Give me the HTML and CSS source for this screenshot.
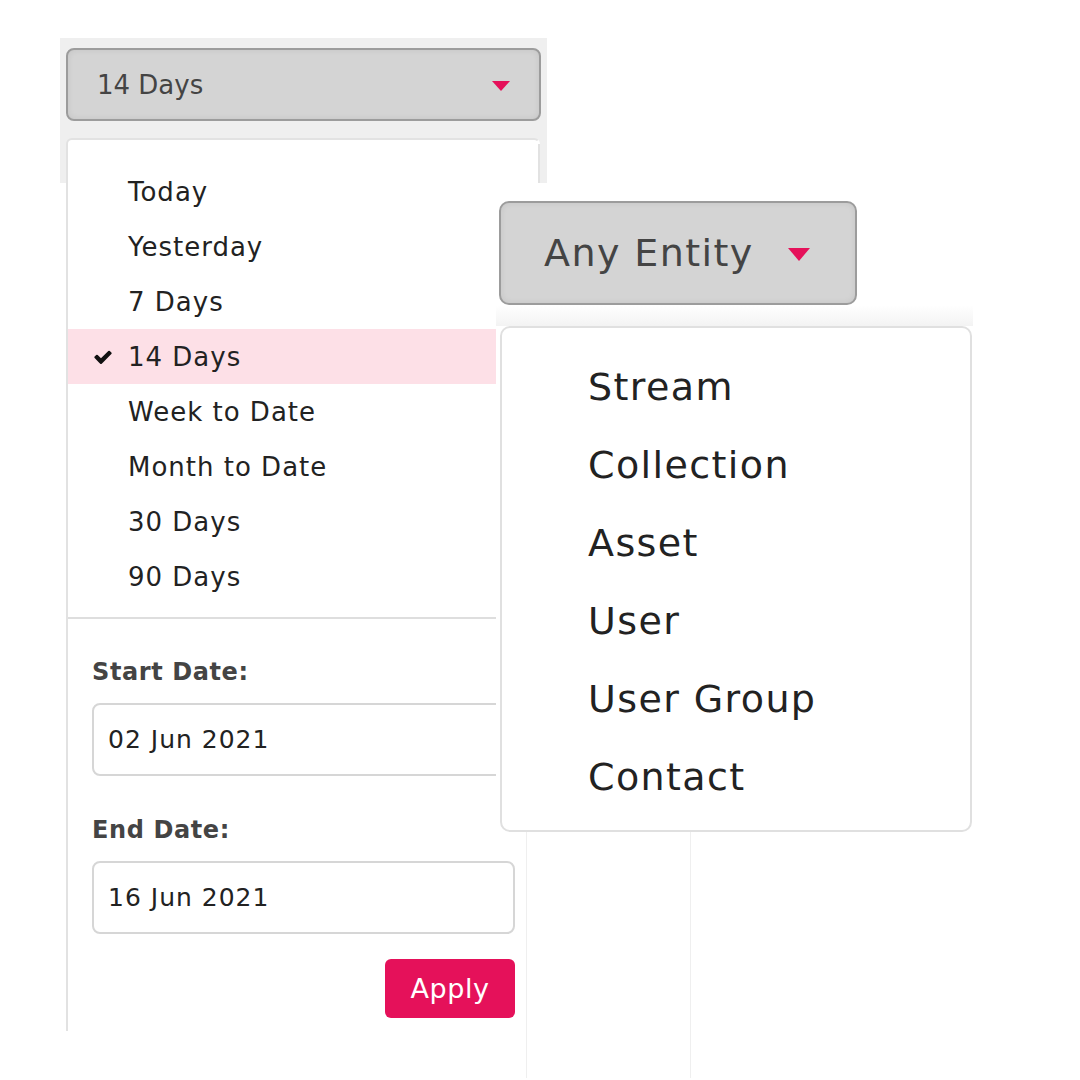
FILE: index.html
```html
<!DOCTYPE html>
<html>
<head>
<meta charset="utf-8">
<link rel="stylesheet" href="styles.css">
</head>
<body>
<div class="stage">
  <div class="date-filter">
    <div class="filter-top">
      <div class="select-btn small">
        <span>14 Days</span>
        <span class="caret caret-sm"></span>
      </div>
    </div>
    <div class="panel">
      <ul class="range-list">
        <li class="range">Today</li>
        <li class="range">Yesterday</li>
        <li class="range">7 Days</li>
        <li class="range active">
          <svg class="check" viewBox="0 0 1792 1792"><path d="M1671 566q0 40-28 68l-724 724-136 136q-28 28-68 28t-68-28l-136-136-362-362q-28-28-28-68t28-68l136-136q28-28 68-28t68 28l294 295 656-657q28-28 68-28t68 28l136 136q28 28 28 68z"/></svg>
          14 Days
        </li>
        <li class="range">Week to Date</li>
        <li class="range">Month to Date</li>
        <li class="range">30 Days</li>
        <li class="range">90 Days</li>
      </ul>
      <div class="custom">
        <label class="field-label">Start Date:</label>
        <div class="date-input">02 Jun 2021</div>
        <label class="field-label">End Date:</label>
        <div class="date-input">16 Jun 2021</div>
        <div class="actions">
          <button class="apply">Apply</button>
        </div>
      </div>
    </div>
  </div>

  <div class="ghost-box"></div>

  <div class="entity-filter">
    <div class="select-btn large">
      <span class="btn-label">Any Entity</span>
      <span class="caret caret-lg"></span>
    </div>
    <div class="entity-gap"></div>
    <ul class="entity-menu">
      <li>Stream</li>
      <li>Collection</li>
      <li>Asset</li>
      <li>User</li>
      <li>User Group</li>
      <li>Contact</li>
    </ul>
  </div>
</div>
</body>
</html>
```

FILE: styles.css
```css
* { box-sizing: border-box; }
html, body {
  margin: 0;
  padding: 0;
  background: #ffffff;
  font-family: "DejaVu Sans", "Liberation Sans", sans-serif;
  color: #222;
}
.stage {
  position: relative;
  width: 1080px;
  height: 1080px;
  overflow: hidden;
  padding-top: 38px;
}
.date-filter {
  margin-left: 60px;
  width: 487px;
}
.filter-top {
  height: 145px;
  background: #efefef;
  padding: 10px 6px 0 6px;
}
.select-btn {
  display: flex;
  align-items: center;
  justify-content: space-between;
  background: #d4d4d4;
  border: 2px solid #9c9c9c;
  color: #444;
  box-shadow: inset 0 0 6px rgba(0,0,0,0.08);
  white-space: nowrap;
}
.select-btn.small {
  height: 73px;
  border-radius: 8px;
  padding: 0 29px 0 29px;
  font-size: 26px;
}
.caret {
  width: 0;
  height: 0;
  flex: none;
  border-left-style: solid;
  border-right-style: solid;
  border-top-style: solid;
  border-left-color: transparent;
  border-right-color: transparent;
  border-top-color: #e5115a;
}
.caret-sm {
  border-left-width: 9px;
  border-right-width: 9px;
  border-top-width: 10px;
  margin-top: 2px;
}
.caret-lg {
  border-left-width: 11px;
  border-right-width: 11px;
  border-top-width: 13px;
  margin-top: 2px;
}
.panel {
  margin: -45px 7px 0 6px;
  height: 893px;
  background: #fff;
  border: 2px solid #e2e2e2;
  border-right-color: transparent;
  border-bottom: none;
  border-radius: 6px 6px 0 0;
  position: relative;
}
.panel::after {
  content: "";
  position: absolute;
  right: -2px;
  top: 4px;
  width: 2px;
  height: 42px;
  background: #e2e2e2;
}
.range-list {
  list-style: none;
  margin: 0;
  padding: 24px 0 13px 0;
  border-bottom: 2px solid #dedede;
}
.range {
  height: 55px;
  display: flex;
  align-items: center;
  padding-left: 60px;
  font-size: 26px;
  letter-spacing: 1px;
  color: #222;
  position: relative;
}
.range.active {
  background: #fde0e7;
}
.check {
  position: absolute;
  left: 25px;
  top: 18px;
  width: 20px;
  height: 20px;
  fill: #111;
}
.custom {
  padding: 38px 23px 0 24px;
}
.field-label {
  display: block;
  font-weight: bold;
  font-size: 24px;
  letter-spacing: 0.6px;
  color: #444;
  height: 30px;
  line-height: 30px;
}
.date-input {
  margin-top: 16px;
  height: 73px;
  border: 2px solid #d6d6d6;
  border-radius: 8px;
  display: flex;
  align-items: center;
  padding-left: 14px;
  font-size: 25px;
  letter-spacing: 1px;
  color: #222;
  margin-bottom: 39px;
}
.date-input + .field-label + .date-input { margin-bottom: 0; }
.actions {
  display: flex;
  justify-content: flex-end;
  margin-top: 25px;
}
.apply {
  width: 130px;
  height: 59px;
  border: none;
  border-radius: 6px;
  background: #e5115a;
  color: #fff;
  font-family: "DejaVu Sans", "Liberation Sans", sans-serif;
  font-size: 27px;
  letter-spacing: 0.6px;
  padding: 0;
}
.entity-filter {
  position: absolute;
  left: 496px;
  top: 183px;
  width: 477px;
  background: #fff;
  padding-top: 18px;
}
.select-btn.large {
  margin-left: 3px;
  width: 358px;
  height: 104px;
  border-radius: 10px;
  padding: 0 0 0 43px;
  font-size: 38px;
  letter-spacing: 1.4px;
  justify-content: flex-start;
  gap: 34px;
}
.btn-label { flex: none; }
.entity-gap {
  height: 21px;
  background: linear-gradient(#ffffff, #f3f3f3);
}
.entity-menu {
  list-style: none;
  margin: 0 1px 0 4px;
  padding: 20px 0 14px 0;
  background: #fff;
  border: 2px solid #e0e0e0;
  border-radius: 10px;
}
.entity-menu li {
  height: 78px;
  display: flex;
  align-items: center;
  padding-left: 86px;
  font-size: 38px;
  letter-spacing: 1.4px;
  color: #222;
}
.ghost-box {
  position: absolute;
  left: 526px;
  top: 832px;
  width: 165px;
  height: 246px;
  border-left: 1px solid #efefef;
  border-right: 1px solid #efefef;
}
```
